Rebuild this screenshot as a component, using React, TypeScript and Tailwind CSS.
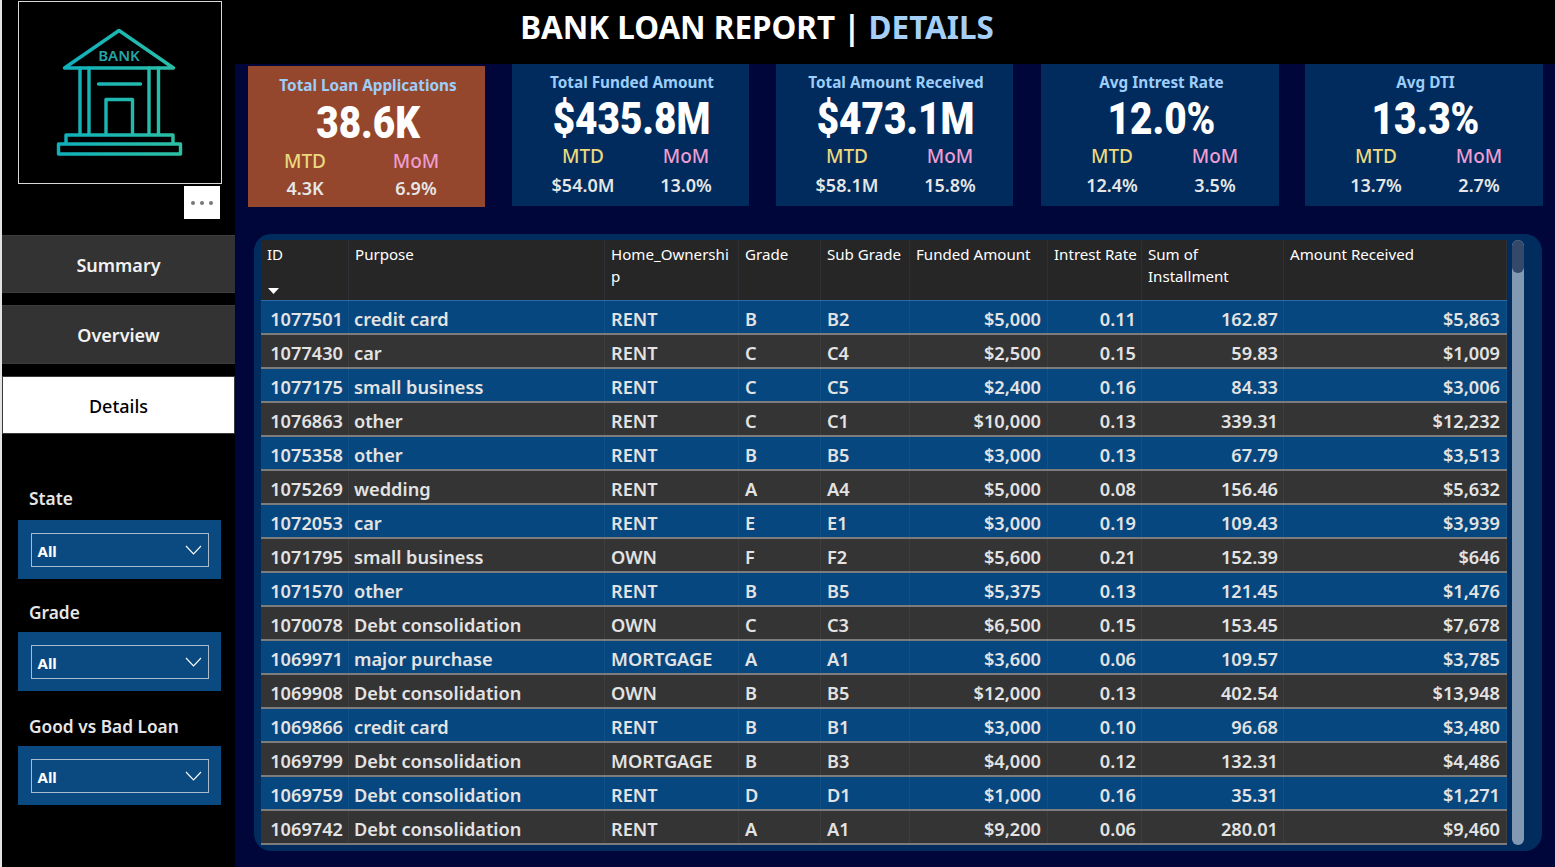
import React from "react";

const F = "[font-family:'Noto_Sans','Open_Sans',sans-serif]";

const cols = "grid grid-cols-[88px_256px_134px_82px_89px_138px_94px_142px_223px]";

const rows: string[][] = [
  ["1077501", "credit card", "RENT", "B", "B2", "$5,000", "0.11", "162.87", "$5,863"],
  ["1077430", "car", "RENT", "C", "C4", "$2,500", "0.15", "59.83", "$1,009"],
  ["1077175", "small business", "RENT", "C", "C5", "$2,400", "0.16", "84.33", "$3,006"],
  ["1076863", "other", "RENT", "C", "C1", "$10,000", "0.13", "339.31", "$12,232"],
  ["1075358", "other", "RENT", "B", "B5", "$3,000", "0.13", "67.79", "$3,513"],
  ["1075269", "wedding", "RENT", "A", "A4", "$5,000", "0.08", "156.46", "$5,632"],
  ["1072053", "car", "RENT", "E", "E1", "$3,000", "0.19", "109.43", "$3,939"],
  ["1071795", "small business", "OWN", "F", "F2", "$5,600", "0.21", "152.39", "$646"],
  ["1071570", "other", "RENT", "B", "B5", "$5,375", "0.13", "121.45", "$1,476"],
  ["1070078", "Debt consolidation", "OWN", "C", "C3", "$6,500", "0.15", "153.45", "$7,678"],
  ["1069971", "major purchase", "MORTGAGE", "A", "A1", "$3,600", "0.06", "109.57", "$3,785"],
  ["1069908", "Debt consolidation", "OWN", "B", "B5", "$12,000", "0.13", "402.54", "$13,948"],
  ["1069866", "credit card", "RENT", "B", "B1", "$3,000", "0.10", "96.68", "$3,480"],
  ["1069799", "Debt consolidation", "MORTGAGE", "B", "B3", "$4,000", "0.12", "132.31", "$4,486"],
  ["1069759", "Debt consolidation", "RENT", "D", "D1", "$1,000", "0.16", "35.31", "$1,271"],
  ["1069742", "Debt consolidation", "RENT", "A", "A1", "$9,200", "0.06", "280.01", "$9,460"],
];

const heads: React.ReactNode[] = [
  "ID",
  "Purpose",
  <>Home_Ownershi<br />p</>,
  "Grade",
  "Sub Grade",
  "Funded Amount",
  "Intrest Rate",
  <>Sum of<br />Installment</>,
  "Amount Received",
];

function BankLogo() {
  return (
    <svg width="202" height="181" viewBox="19 2 202 181" fill="none">
      <defs>
        <linearGradient id="bk" x1="58" y1="90" x2="181" y2="100" gradientUnits="userSpaceOnUse">
          <stop offset="0" stopColor="#0fb0bd" />
          <stop offset="1" stopColor="#2cc0a4" />
        </linearGradient>
      </defs>
      <g stroke="url(#bk)" strokeWidth="3.4" strokeLinejoin="round" strokeLinecap="round">
        <path d="M119 30.500 L64.500 68 H173.500 Z" />
        <path d="M80 68 V134 M89 68 V134 M149 68 V134 M158.500 68 V134" />
        <path d="M98.500 84 H140.500" />
        <path d="M106 134 V99.500 H132.500 V134" />
        <path d="M66 143.500 V135 H173 V143.500" />
        <path d="M58.500 144 H180.500 V154 H58.500 Z" />
      </g>
      <text x="119" y="61" textAnchor="middle" fill="#24a6a8" fontSize="15" fontWeight="600" fontFamily="'Noto Sans',sans-serif">BANK</text>
    </svg>
  );
}

function NavButton({ label, active, cls }: { label: string; active?: boolean; cls: string }) {
  return (
    <div
      className={`${cls} flex items-center justify-center pt-[2px] text-[18px] ${
        active
          ? "bg-white text-black border border-[#3a3a3a] font-medium"
          : "bg-[#333333] text-[#f2f2f2] font-semibold border-y border-[#3c3c3c]"
      }`}
    >
      {label}
    </div>
  );
}

function Slicer({ label, cls, panelCls }: { label: string; cls: string; panelCls: string }) {
  return (
    <div className={cls}>
      <div className="ml-[27px] h-[24px] pt-[2px] flex items-center text-[17.3px] leading-none font-semibold text-[#e6e6e6]">{label}</div>
      <div className={`${panelCls} ml-[16px] w-[203px] h-[59px] bg-[#0a4a80] flex items-center justify-center`}>
        <div className="w-[178px] h-[34px] border border-[#a9bccd] flex items-center justify-between pl-[6px] pr-[6px]">
          <span className="pt-[3px] text-[15px] font-bold text-white leading-none">All</span>
          <svg width="17" height="10" viewBox="0 0 17 10" fill="none">
            <path d="M1 1 L8.500 9 L16 1" stroke="#ffffff" strokeWidth="1.100" />
          </svg>
        </div>
      </div>
    </div>
  );
}

function Kpi({ title, value, mtd, mom, brown, cls }: { title: string; value: string; mtd: string; mom: string; brown?: boolean; cls: string }) {
  return (
    <div className={`${cls} flex flex-col items-center ${brown ? "h-[141px] mt-[2px] bg-[#94472d] pt-[9px]" : "h-[142px] bg-[#002b5c] pt-[8px]"}`}>
      <div className="pl-[3px] h-[22px] flex items-center text-[15.3px] font-bold text-[#9dcdfa] leading-none whitespace-nowrap">{title}</div>
      <div className={`pl-[3px] h-[46px] flex items-center text-[45px] font-black text-white leading-none font-['Roboto',sans-serif] [transform:scaleX(0.86)] whitespace-nowrap ${brown ? "mt-[2px]" : "mt-[1px]"}`}>{value}</div>
      <div className={`grid w-full ${brown ? "grid-cols-[114px_108px] mt-[2px]" : "grid-cols-[142px_64px] mt-[1px]"}`}>
        <div className="flex flex-col items-center">
          <div className="h-[28px] flex items-center text-[19px] font-medium leading-none text-[#ecd97f]">MTD</div>
          <div className={`h-[28px] flex items-center text-[18px] font-semibold leading-none text-[#e6e6e6] ${brown ? "-mt-[1px]" : "mt-[1px]"}`}>{mtd}</div>
        </div>
        <div className="flex flex-col items-center">
          <div className="h-[28px] flex items-center text-[19px] font-medium leading-none text-[#ee9dd0]">MoM</div>
          <div className={`h-[28px] flex items-center text-[18px] font-semibold leading-none text-[#e6e6e6] ${brown ? "-mt-[1px]" : "mt-[1px]"}`}>{mom}</div>
        </div>
      </div>
    </div>
  );
}

function Table() {
  return (
    <div className="w-[1246px]">
      <div className={`${cols} h-[60px] bg-[#262626] text-[15.1px] leading-[22px] text-white`}>
        {heads.map((h, i) => (
          <div key={i} className="relative pl-[6px] pt-[3px] border-r border-[#2f2f36] whitespace-nowrap">
            {h}
            {i === 0 && (
              <svg className="absolute left-[7px] bottom-[6px]" width="11" height="6" viewBox="0 0 11 6">
                <path d="M0 0 H11 L5.500 6 Z" fill="#ffffff" />
              </svg>
            )}
          </div>
        ))}
      </div>
      {rows.map((r, ri) => (
        <div
          key={r[0]}
          className={`${cols} text-[18.2px] font-semibold text-[#e3e3e3] leading-none ${
            ri % 2 === 0 ? "bg-[#07477f]" : "bg-[#343434]"
          } border-b-2 border-[#7c7c7c] ${ri === 0 ? "h-[35px] border-t border-t-[#2a6aa8]" : "h-[34px]"}`}
        >
          {r.map((c, ci) => (
            <div
              key={ci}
              className={`flex items-center pt-[4px] border-r border-[#ffffff0d] whitespace-nowrap ${
                ci === 0 || ci === 6 || ci === 7
                  ? "justify-end pr-[5px]"
                  : ci >= 5
                  ? "justify-end pr-[6px]"
                  : ci === 1
                  ? "justify-start pl-[5px]"
                  : "justify-start pl-[6px]"
              }`}
            >
              {c}
            </div>
          ))}
        </div>
      ))}
    </div>
  );
}

export default function App() {
  return (
    <div className={`${F} w-[1555px] h-[867px] overflow-hidden flex bg-black border-l-2 border-[#e4e4e4]`}>
      <aside className="w-[233px] shrink-0 bg-black flex flex-col">
        <div className="ml-[16px] mt-[1px] w-[204px] h-[183px] border border-[#d8d8d8] bg-black">
          <BankLogo />
        </div>
        <div className="ml-[182px] mt-[2px] w-[36px] h-[33px] bg-white flex items-center justify-center gap-[5px]">
          <span className="w-[4px] h-[4px] rounded-full bg-[#777777]" />
          <span className="w-[4px] h-[4px] rounded-full bg-[#777777]" />
          <span className="w-[4px] h-[4px] rounded-full bg-[#777777]" />
        </div>
        <NavButton label="Summary" cls="mt-[16px] h-[58px]" />
        <NavButton label="Overview" cls="mt-[12px] h-[59px]" />
        <NavButton label="Details" active cls="mt-[12px] h-[58px]" />
        <Slicer label="State" cls="mt-[52px]" panelCls="mt-[10px]" />
        <Slicer label="Grade" cls="mt-[21px]" panelCls="mt-[8px]" />
        <Slicer label="Good vs Bad Loan" cls="mt-[23px]" panelCls="mt-[8px]" />
      </aside>
      <main className="flex-1 flex flex-col bg-[#00053a]">
        <header className="h-[64px] shrink-0 bg-black flex items-center justify-center pr-[276px] pb-[10px] text-[31.4px] font-bold text-white leading-none whitespace-nowrap">
          <span className="whitespace-pre">BANK LOAN REPORT | </span>
          <span className="text-[#a6cff8]">DETAILS</span>
        </header>
        <div className="flex items-start pl-[13px]">
          <Kpi brown title="Total Loan Applications" value="38.6K" mtd="4.3K" mom="6.9%" cls="w-[237px]" />
          <Kpi title="Total Funded Amount" value="$435.8M" mtd="$54.0M" mom="13.0%" cls="w-[237px] ml-[27px]" />
          <Kpi title="Total Amount Received" value="$473.1M" mtd="$58.1M" mom="15.8%" cls="w-[237px] ml-[27px]" />
          <Kpi title="Avg Intrest Rate" value="12.0%" mtd="12.4%" mom="3.5%" cls="w-[238px] ml-[28px]" />
          <Kpi title="Avg DTI" value="13.3%" mtd="13.7%" mom="2.7%" cls="w-[238px] ml-[26px]" />
        </div>
        <section className="ml-[19px] mt-[27px] w-[1288px] h-[617px] rounded-[17px] bg-[#002c5e] pl-[7px] pt-[6px] flex items-start">
          <Table />
          <div className="ml-[5px] w-[12px] h-[605px] rounded-[6px] bg-[#8299b4] overflow-hidden">
            <div className="h-[33px] rounded-[6px] bg-[#34496a]" />
          </div>
        </section>
      </main>
    </div>
  );
}
